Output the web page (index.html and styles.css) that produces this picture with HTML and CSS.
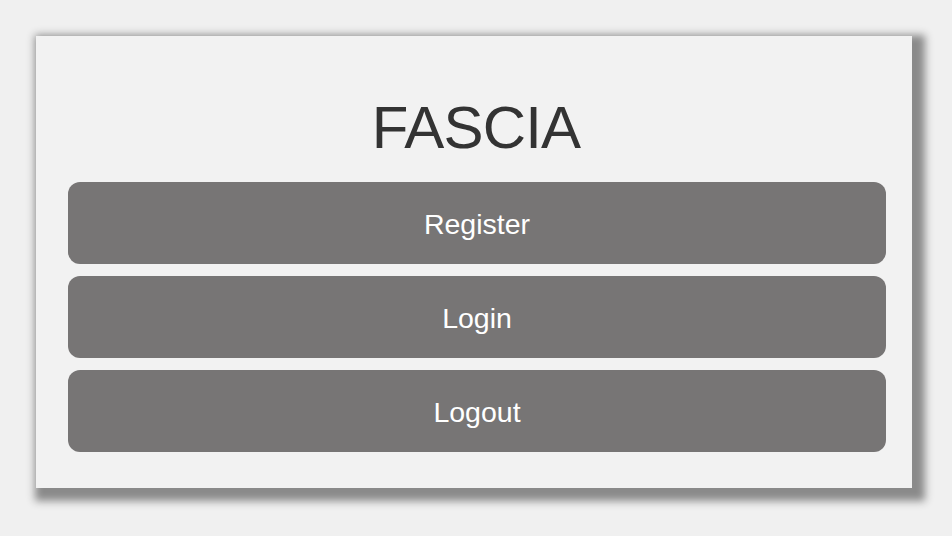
FILE: index.html
```html
<!DOCTYPE html>
<html lang="en">
<head>
<meta charset="utf-8">
<title>FASCIA</title>
<link rel="stylesheet" href="styles.css">
</head>
<body>
<main class="card">
  <h1 class="title">FASCIA</h1>
  <nav class="actions">
    <button class="btn" type="button">Register</button>
    <button class="btn" type="button">Login</button>
    <button class="btn" type="button">Logout</button>
  </nav>
</main>
</body>
</html>
```
FILE: styles.css
```css
html, body {
  margin: 0;
  padding: 0;
}
body {
  background: #f0f0f0;
  font-family: "Liberation Sans", Arial, Helvetica, sans-serif;
  padding: 36px 40px 36px 36px;
  box-sizing: border-box;
  width: 952px;
  height: 536px;
}
.card {
  width: 876px;
  height: 452px;
  box-sizing: border-box;
  background: #f2f2f2;
  box-shadow: 6px 6px 8px 7px #8a8a8a;
  padding: 62px 26px 36px 32px;
  display: flex;
  flex-direction: column;
}
.title {
  margin: 0 0 24px 0;
  font-size: 60px;
  line-height: 60px;
  letter-spacing: -0.8px;
  font-weight: 400;
  color: #333333;
  text-align: center;
  padding-right: 2px;
}
.actions {
  display: flex;
  flex-direction: column;
  gap: 12px;
}
.btn {
  height: 82px;
  border: none;
  border-radius: 12px;
  background: #777575;
  color: #ffffff;
  font-family: "Liberation Sans", Arial, Helvetica, sans-serif;
  font-size: 28.5px;
  display: flex;
  align-items: center;
  justify-content: center;
  padding: 3px 0 0 0;
  cursor: pointer;
}
```
